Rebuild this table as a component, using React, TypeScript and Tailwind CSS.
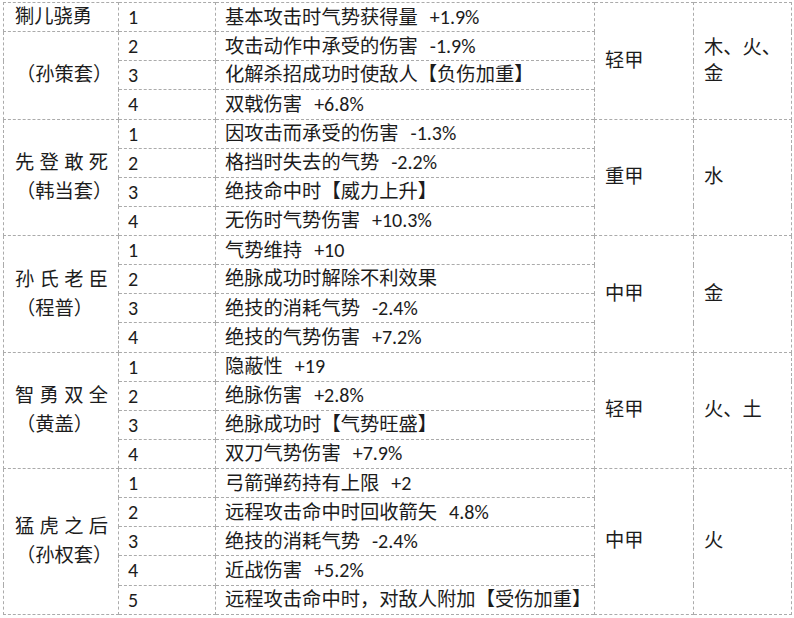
// ── Set bonus table (spreadsheet style) ─────────────────────────────
type Group = {
  name: string
  suit: string
  split?: boolean
  rows: [string, string?][]
  armor: string
  element: string[]
}

const groups: Group[] = [
  {
    name: '猘儿骁勇',
    suit: '（孙策套）',
    split: true,
    rows: [
      ['基本攻击时气势获得量', '+1.9%'],
      ['攻击动作中承受的伤害', '-1.9%'],
      ['化解杀招成功时使敌人【负伤加重】'],
      ['双戟伤害', '+6.8%'],
    ],
    armor: '轻甲',
    element: ['木、火、', '金'],
  },
  {
    name: '先登敢死',
    suit: '（韩当套）',
    rows: [
      ['因攻击而承受的伤害', '-1.3%'],
      ['格挡时失去的气势', '-2.2%'],
      ['绝技命中时【威力上升】'],
      ['无伤时气势伤害', '+10.3%'],
    ],
    armor: '重甲',
    element: ['水'],
  },
  {
    name: '孙氏老臣',
    suit: '（程普）',
    rows: [
      ['气势维持', '+10'],
      ['绝脉成功时解除不利效果'],
      ['绝技的消耗气势', '-2.4%'],
      ['绝技的气势伤害', '+7.2%'],
    ],
    armor: '中甲',
    element: ['金'],
  },
  {
    name: '智勇双全',
    suit: '（黄盖）',
    rows: [
      ['隐蔽性', '+19'],
      ['绝脉伤害', '+2.8%'],
      ['绝脉成功时【气势旺盛】'],
      ['双刀气势伤害', '+7.9%'],
    ],
    armor: '轻甲',
    element: ['火、土'],
  },
  {
    name: '猛虎之后',
    suit: '（孙权套）',
    rows: [
      ['弓箭弹药持有上限', '+2'],
      ['远程攻击命中时回收箭矢', '4.8%'],
      ['绝技的消耗气势', '-2.4%'],
      ['近战伤害', '+5.2%'],
      ['远程攻击命中时，对敌人附加【受伤加重】'],
    ],
    armor: '中甲',
    element: ['火'],
  },
]

const cell = 'border border-dashed border-[#ababab] px-[10px] py-0 align-middle leading-[24px]'

function SpacedName({ text }: { text: string }) {
  return (
    <div className="flex w-[93px] justify-between">
      {text.split('').map((c, i) => (
        <span key={i}>{c}</span>
      ))}
    </div>
  )
}

export default function App() {
  return (
    <div className="min-h-screen bg-white pl-[3px] pt-[2px] text-[19.3px] text-[#1c1c1c] font-['Carlito','Lato','Noto_Sans_CJK_SC',sans-serif]">
      <table className="table-fixed border-collapse w-[788px]">
        <colgroup>
          <col className="w-[115px]" />
          <col className="w-[97px]" />
          <col className="w-[379px]" />
          <col className="w-[99px]" />
          <col className="w-[98px]" />
        </colgroup>
        <tbody>
          {groups.map((g, gi) =>
            g.rows.map((r, i) => (
              <tr key={`${gi}-${i}`} className="h-[29.14px]">
                {g.split ? (
                  i === 0 ? (
                    <td className={`${cell} pl-[11px] whitespace-nowrap`}>{g.name}</td>
                  ) : i === 1 ? (
                    <td rowSpan={g.rows.length - 1} className={`${cell} pl-[12px]`}>
                      {g.suit}
                    </td>
                  ) : null
                ) : i === 0 ? (
                  <td rowSpan={g.rows.length} className={`${cell} pl-[11px]`}>
                    <div className="leading-[29px]">
                      <SpacedName text={g.name} />
                      <div className="pl-[1px]">{g.suit}</div>
                    </div>
                  </td>
                ) : null}
                <td className={`${cell} pl-[9px] text-[20px]`}>{i + 1}</td>
                <td className={`${cell} pl-[9px] whitespace-nowrap`}>
                  {r[0]}
                  {r[1] && <span className="ml-[12px] text-[20px]">{r[1]}</span>}
                </td>
                {i === 0 && (
                  <>
                    <td rowSpan={g.rows.length} className={cell}>
                      {g.armor}
                    </td>
                    <td rowSpan={g.rows.length} className={cell}>
                      <div className="leading-[26px] whitespace-nowrap">
                        {g.element.map((line, li) => (
                          <div key={li}>{line}</div>
                        ))}
                      </div>
                    </td>
                  </>
                )}
              </tr>
            )),
          )}
        </tbody>
      </table>
    </div>
  )
}
